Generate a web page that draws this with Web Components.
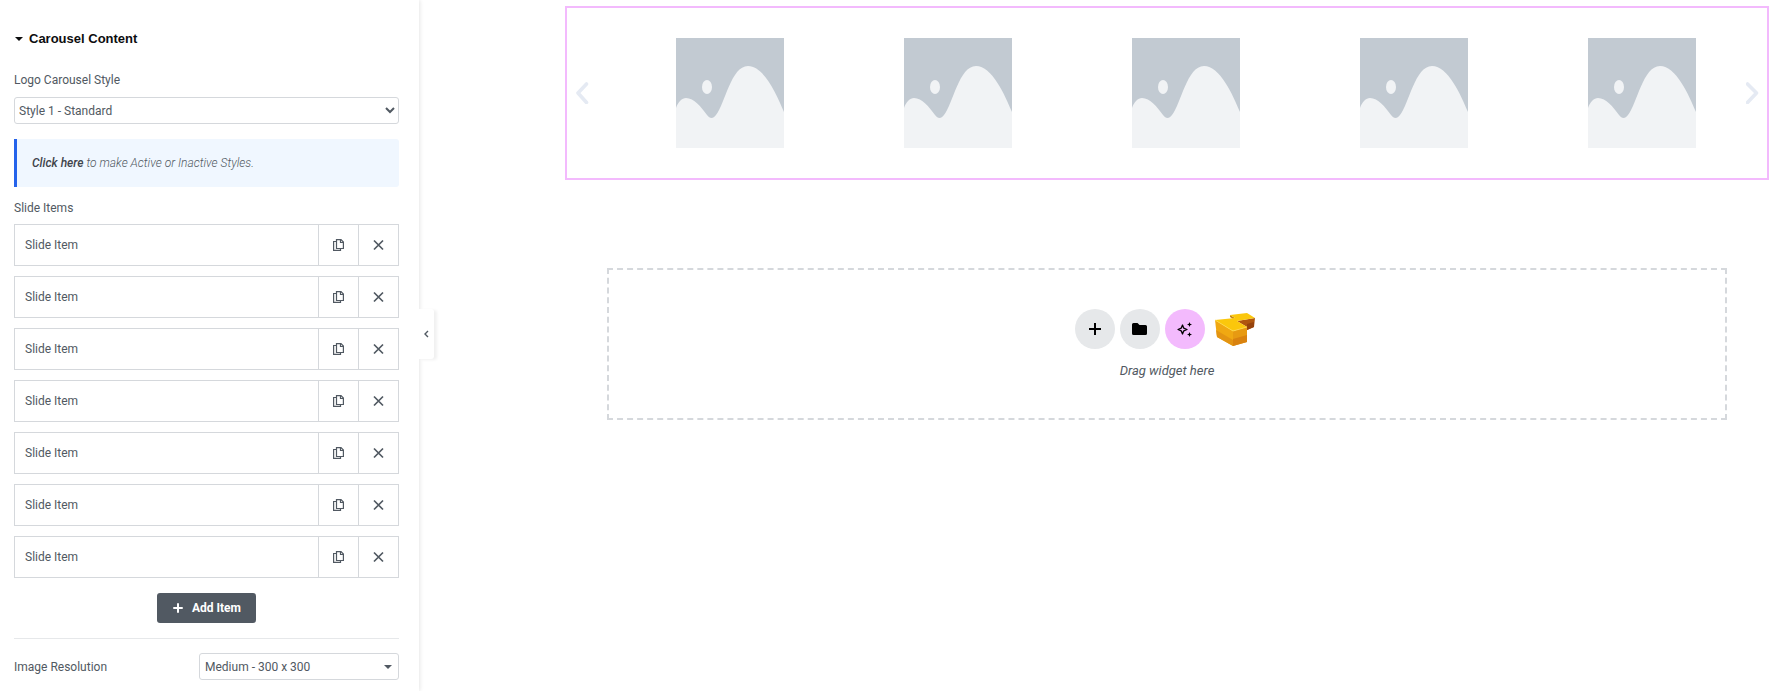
<!DOCTYPE html>
<html lang="en">
<head>
<meta charset="utf-8">
<meta name="viewport" content="width=device-width, initial-scale=1">
<title>Carousel editor</title>
<style>
    body {
        margin: 0;
        background-color: #fff;
        color: #515962;
        font-family: Roboto, "Liberation Sans", sans-serif;
        font-size: 12px;
        line-height: 16px;
        --line: #d5d8dc;
        --pink: #f3bafd;
    }
</style>
</head>
<body>
<editor-app></editor-app>

<script>
class EditorIcon extends HTMLElement {
    static shapes = {
        copy: `<g fill="none" stroke="currentColor" stroke-width="1.2"><path d="M3.5 2.5H.6V11.4H7.5V9.5"/><path d="M3.5 .6H8L10.4 3V9.5H3.5Z"/><path d="M7.5 .6V3.5H10.4"/></g>`,
        close: `<path d="M1 1.5L10 10.5M10 1.5L1 10.5" fill="none" stroke="currentColor" stroke-width="1.7"/>`,
        add: `<path d="M6 2V10M2 6H10" fill="none" stroke="currentColor" stroke-width="2" stroke-linecap="round"/>`,
        plus: `<path d="M6 0V12M0 6H12" fill="none" stroke="currentColor" stroke-width="2"/>`,
        folder: `<path d="M1.5 0H5.5L7.5 2H13.5Q15 2 15 3.5V10.5Q15 12 13.5 12H1.5Q0 12 0 10.5V1.5Q0 0 1.5 0Z" fill="currentColor"/>`,
        caret: `<path d="M0 0H8L4 4Z" fill="currentColor"/>`,
        left: `<path d="M4 1L1 4L4 7" fill="none" stroke="currentColor" stroke-width="1.4"/>`,
        prev: `<path d="M10.5 2L2 11L10.5 20.5" fill="none" stroke="currentColor" stroke-width="3.6" stroke-linecap="round" stroke-linejoin="round"/>`,
        next: `<path d="M1.5 2L10.5 11L1.5 20.5" fill="none" stroke="currentColor" stroke-width="3.6" stroke-linecap="round" stroke-linejoin="round"/>`,
        sparkle: `<path d="M5.5 3L6.8 6.2L10 7.5L6.8 8.8L5.5 12L4.2 8.8L1 7.5L4.2 6.2Z" fill="none" stroke="currentColor" stroke-width="1.3" stroke-linejoin="round"/><path d="M12.5 0L13.2 1.8L15 2.5L13.2 3.2L12.5 5L11.8 3.2L10 2.5L11.8 1.8ZM12.5 10L13.2 11.8L15 12.5L13.2 13.2L12.5 15L11.8 13.2L10 12.5L11.8 11.8Z" fill="currentColor"/>`,
        blocks: `<path d="M15 2L20 5L18 6L15 4Z" fill="#c58411"/>
            <path d="M22 8L40 5L39 14L32 17V14Z" fill="#b0560f"/>
            <path d="M32 11L39 9V14L32 17Z" fill="#96430c"/>
            <path d="M0 7L20 5L15 2L32 0L40 5L22 8L32 14L18 18Z" fill="#fbc70c"/>
            <path d="M0 7L18 18V33L2 24Z" fill="#f0a812"/>
            <path d="M1 17L18 27V33L2 24Z" fill="#e39412"/>
            <path d="M18 18L32 14V29L18 33Z" fill="#e79a12"/>
            <path d="M18 26L32 22V29L18 33Z" fill="#d9820f"/>
            <path d="M0 7L18 18L32 14" fill="none" stroke="#ffdc4a" stroke-width=".8"/>`
    };

    static sizes = {
        copy: [12, 12], close: [11, 12], add: [12, 12], plus: [12, 12], folder: [15, 12],
        caret: [8, 4], left: [5, 8], prev: [13, 22], next: [13, 22], sparkle: [15, 15], blocks: [40, 33]
    };

    constructor() {
        super();
        this.attachShadow({ mode: "open" });
    }

    connectedCallback() {
        const name = this.getAttribute("name");
        const [w, h] = EditorIcon.sizes[name];
        this.shadowRoot.innerHTML = `
        <style>
            :host { display: inline-flex; flex: none; }
            svg { display: block; }
        </style>
        <svg width="${w}" height="${h}" viewBox="0 0 ${w} ${h}" aria-hidden="true">${EditorIcon.shapes[name]}</svg>
    `;
    }
}

class PanelSelect extends HTMLElement {
    constructor() {
        super();
        this.attachShadow({ mode: "open" });
    }

    connectedCallback() {
        this.shadowRoot.innerHTML = `
        <style>
            :host {
                display: flex;
                flex-direction: column;
                gap: 9px;
            }
            :host([inline]) {
                flex-direction: row;
                align-items: center;
                justify-content: space-between;
            }
            .box { display: grid; align-items: center; }
            :host([inline]) .box { width: 200px; }
            select, editor-icon { grid-area: 1 / 1; }
            select {
                width: 100%;
                height: 27px;
                padding: 0;
                border: 1px solid var(--line);
                border-radius: 3px;
                background-color: #fff;
                color: inherit;
                font: inherit;
            }
            :host([inline]) select { appearance: none; padding: 0 5px; }
            editor-icon { justify-self: end; margin-right: 7px; pointer-events: none; }
        </style>
        <label for="field">${this.getAttribute("label")}</label>
        <div class="box">
            <select id="field"><option>${this.getAttribute("value")}</option></select>
            ${this.hasAttribute("inline") ? `<editor-icon name="caret"></editor-icon>` : ""}
        </div>
    `;
    }
}

class PanelNotice extends HTMLElement {
    constructor() {
        super();
        this.attachShadow({ mode: "open" }).innerHTML = `
        <style>
            :host {
                display: block;
                padding: 16px 15px;
                border-left: 3px solid #2563eb;
                border-radius: 0 3px 3px 0;
                background-color: #f0f7ff;
                font-style: italic;
                font-weight: 300;
            }
        </style>
        <slot></slot>
    `;
    }
}

class SlideItem extends HTMLElement {
    constructor() {
        super();
        this.attachShadow({ mode: "open" }).innerHTML = `
        <style>
            :host {
                display: flex;
                height: 40px;
                border: 1px solid var(--line);
            }
            button {
                display: flex;
                align-items: center;
                justify-content: center;
                box-sizing: border-box;
                width: 40px;
                padding: 0;
                border: 0;
                border-left: 1px solid var(--line);
                background: none;
                color: inherit;
                font: inherit;
                cursor: pointer;
            }
            .title {
                flex: 1;
                justify-content: flex-start;
                padding-left: 10px;
                border-left: 0;
            }
        </style>
        <button class="title"><slot></slot></button>
        <button aria-label="Duplicate"><editor-icon name="copy"></editor-icon></button>
        <button aria-label="Remove"><editor-icon name="close"></editor-icon></button>
    `;
    }
}

class SlideRepeater extends HTMLElement {
    constructor() {
        super();
        this.attachShadow({ mode: "open" }).innerHTML = `
        <style>
            :host { display: flex; flex-direction: column; gap: 8px; }
            .items { display: flex; flex-direction: column; gap: 10px; }
            .add {
                display: flex;
                align-items: center;
                align-self: center;
                gap: 8px;
                height: 30px;
                margin-top: 7px;
                padding: 0 15px;
                border: 0;
                border-radius: 3px;
                background-color: #515962;
                color: #fff;
                font: inherit;
                font-weight: 700;
                cursor: pointer;
            }
        </style>
        <div>Slide Items</div>
        <div class="items"><slot></slot></div>
        <button class="add"><editor-icon name="add"></editor-icon>Add Item</button>
    `;
        this.shadowRoot.querySelector(".add").addEventListener("click", () => {
            const item = document.createElement("slide-item");
            item.textContent = "Slide Item";
            this.append(item);
        });
    }
}

class EditorPanel extends HTMLElement {
    constructor() {
        super();
        this.attachShadow({ mode: "open" }).innerHTML = `
        <style>
            :host {
                display: block;
                position: relative;
                box-sizing: border-box;
                width: 419px;
                padding: 31px 20px 8px 14px;
                background-color: #fff;
                box-shadow: 1px 0 4px rgba(0, 0, 0, .1);
            }
            h2 {
                display: flex;
                align-items: center;
                gap: 6px;
                margin: 0 0 25px;
                padding-left: 1px;
                color: #0c0d0e;
                font-family: "Liberation Sans", sans-serif;
                font-size: 13px;
                line-height: 16px;
            }
            panel-notice { margin: 15px 0 13px; }
            a { color: #3f444b; font-weight: 500; text-decoration: none; }
            hr { margin: 15px 0 14px; border: 0; border-top: 1px solid #e6e8ea; }
            /* sits on top of the preview, at the edge of the panel */
            .toggle {
                position: absolute;
                top: 309px;
                left: 100%;
                display: flex;
                align-items: center;
                width: 15px;
                height: 50px;
                padding: 0 0 0 5px;
                border: 0;
                border-radius: 0 3px 3px 0;
                background-color: #fff;
                color: #515962;
                box-shadow: 3px 1px 3px rgba(0, 0, 0, .06);
                cursor: pointer;
            }
        </style>
        <h2><editor-icon name="caret"></editor-icon>Carousel Content</h2>
        <panel-select label="Logo Carousel Style" value="Style 1 - Standard"></panel-select>
        <panel-notice><a href="#">Click here</a> to make Active or Inactive Styles.</panel-notice>
        <slide-repeater>
            ${"<slide-item>Slide Item</slide-item>".repeat(7)}
        </slide-repeater>
        <hr>
        <panel-select inline label="Image Resolution" value="Medium - 300 x 300"></panel-select>
        <button class="toggle" aria-label="Hide panel"><editor-icon name="left"></editor-icon></button>
    `;
    }
}

class PlaceholderImage extends HTMLElement {
    constructor() {
        super();
        this.attachShadow({ mode: "open" }).innerHTML = `
        <style>
            :host { display: flex; justify-content: center; }
        </style>
        <svg width="108" height="110" viewBox="0 0 108 110" role="img" aria-label="Placeholder">
            <rect width="108" height="110" fill="#c2cad2"/>
            <ellipse cx="31" cy="49" rx="5" ry="7" fill="#f1f3f5"/>
            <path d="M0 70C2 64 6 60 10 60C18 60 25 69 31 77C34 81 37 81 40 77C49 66 55 28 72 28C88 28 101 57 108 74V110H0Z" fill="#f1f3f5"/>
        </svg>
    `;
    }
}

class LogoCarousel extends HTMLElement {
    constructor() {
        super();
        this.attachShadow({ mode: "open" }).innerHTML = `
        <style>
            :host {
                display: flex;
                align-items: center;
                box-sizing: border-box;
                height: 174px;
                padding: 0 8px 0 9px;
                border: 2px solid var(--pink);
            }
            .slides {
                flex: 1;
                display: grid;
                grid-template-columns: repeat(5, 1fr);
                margin: 0 -10px 0 27px;
            }
            button {
                display: flex;
                padding: 0;
                border: 0;
                background: none;
                color: #e5eaf3;
                cursor: pointer;
            }
        </style>
        <button aria-label="Previous"><editor-icon name="prev"></editor-icon></button>
        <div class="slides"><slot></slot></div>
        <button aria-label="Next"><editor-icon name="next"></editor-icon></button>
    `;
    }
}

class DropArea extends HTMLElement {
    constructor() {
        super();
        this.attachShadow({ mode: "open" }).innerHTML = `
        <style>
            :host {
                display: flex;
                flex-direction: column;
                align-items: center;
                justify-content: center;
                gap: 14px;
                box-sizing: border-box;
                height: 152px;
                border: 2px dashed var(--line);
                font-size: 13px;
            }
            .actions { display: flex; align-items: center; gap: 5px; }
            button {
                display: flex;
                align-items: center;
                justify-content: center;
                width: 40px;
                height: 40px;
                padding: 0;
                border: 0;
                border-radius: 50%;
                background-color: #e6e8ea;
                color: #000;
                cursor: pointer;
            }
            .ai { background-color: var(--pink); }
            .blocks { width: 50px; border-radius: 0; background: none; }
            p { margin: 0; font-style: italic; }
        </style>
        <div class="actions">
            <button aria-label="Add container"><editor-icon name="plus"></editor-icon></button>
            <button aria-label="Add template"><editor-icon name="folder"></editor-icon></button>
            <button class="ai" aria-label="Build with AI"><editor-icon name="sparkle"></editor-icon></button>
            <button class="blocks" aria-label="Blocks"><editor-icon name="blocks"></editor-icon></button>
        </div>
        <p><slot></slot></p>
    `;
    }
}

class EditorApp extends HTMLElement {
    constructor() {
        super();
        this.attachShadow({ mode: "open" }).innerHTML = `
        <style>
            :host { display: flex; min-height: 100vh; }
            editor-panel { flex: none; }
            main {
                flex: 1;
                min-width: 0;
                padding: 6px 6px 0 146px;
            }
            drop-area { margin: 88px 42px 0; }
        </style>
        <editor-panel></editor-panel>
        <main>
            <logo-carousel>
                ${"<placeholder-image></placeholder-image>".repeat(5)}
            </logo-carousel>
            <drop-area>Drag widget here</drop-area>
        </main>
    `;
    }
}

customElements.define("editor-icon", EditorIcon);
customElements.define("panel-select", PanelSelect);
customElements.define("panel-notice", PanelNotice);
customElements.define("slide-item", SlideItem);
customElements.define("slide-repeater", SlideRepeater);
customElements.define("editor-panel", EditorPanel);
customElements.define("placeholder-image", PlaceholderImage);
customElements.define("logo-carousel", LogoCarousel);
customElements.define("drop-area", DropArea);
customElements.define("editor-app", EditorApp);
</script>
</body>
</html>
